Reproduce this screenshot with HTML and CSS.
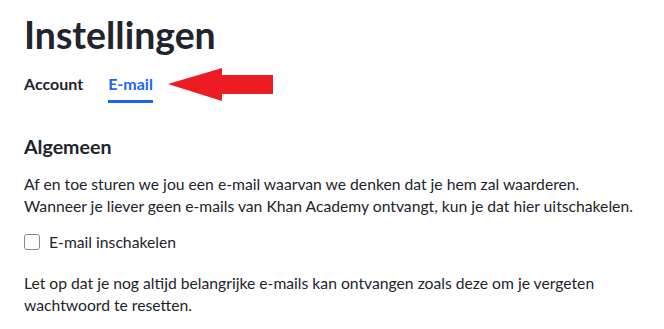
FILE: index.html
```html
<!DOCTYPE html>
<html lang="nl">
  <head>
    <meta charset="UTF-8" />
    <meta name="viewport" content="width=device-width, initial-scale=1.0" />
    <title>Instellingen</title>
    <link rel="stylesheet" href="styles.css">
  </head>
  <body>
    <div class="page">
      <h1 class="title">Instellingen</h1>
      <nav class="tabs">
        <a class="tab">Account</a>
        <a class="tab tab-active">E-mail</a>
        <svg class="arrow" width="106" height="34" viewBox="0 0 106 34">
          <polygon points="0,16 54,0 54,7 105,7 105,26 54,26 54,33" fill="#ed1c24" />
        </svg>
      </nav>

      <h2 class="section-title">Algemeen</h2>
      <p class="text">Af en toe sturen we jou een e-mail waarvan we denken dat je hem zal waarderen. Wanneer je liever geen e-mails van Khan Academy ontvangt, kun je dat hier uitschakelen.</p>
      <label class="check-row">
        <input type="checkbox" class="check">
        <span>E-mail inschakelen</span>
      </label>
      <p class="text note">Let op dat je nog altijd belangrijke e-mails kan ontvangen zoals deze om je vergeten wachtwoord te resetten.</p>
    </div>
  </body>
</html>
```

FILE: styles.css
```css
body{
  margin: 0;
  background-color: white;
  color: #21242c;
  font-family: Lato, "Open Sans", Arial, sans-serif;
}
.page{
  width: 620px;
  padding: 12px 20px 0 24px;
}
.title{
  font-size: 37.4px;
  font-weight: bold;
  line-height: 46px;
  margin: 0;
}
.tabs{
  display: flex;
  align-items: flex-start;
  gap: 25px;
  margin-top: 16px;
}
.tab{
  font-size: 16px;
  font-weight: bold;
  line-height: 20px;
  padding-bottom: 6px;
  border-bottom: 3px solid transparent;
}
.tab-active{
  color: #1865f2;
  border-bottom-color: #1865f2;
}
.arrow{
  margin-left: -10px;
  margin-top: -6px;
}
.section-title{
  font-size: 19.6px;
  font-weight: bold;
  line-height: 24px;
  margin: 32px 0 0 0;
}
.text{
  font-size: 15.7px;
  line-height: 22px;
  margin: 14px 0 0 0;
}
.check-row{
  display: flex;
  align-items: center;
  gap: 9px;
  font-size: 15.7px;
  line-height: 22px;
  margin-top: 14px;
}
.check{
  appearance: none;
  width: 16px;
  height: 16px;
  margin: 0;
  border: 1px solid #8a8c90;
  border-radius: 3px;
  background-color: white;
}
.note{
  margin-top: 19px;
}
```
